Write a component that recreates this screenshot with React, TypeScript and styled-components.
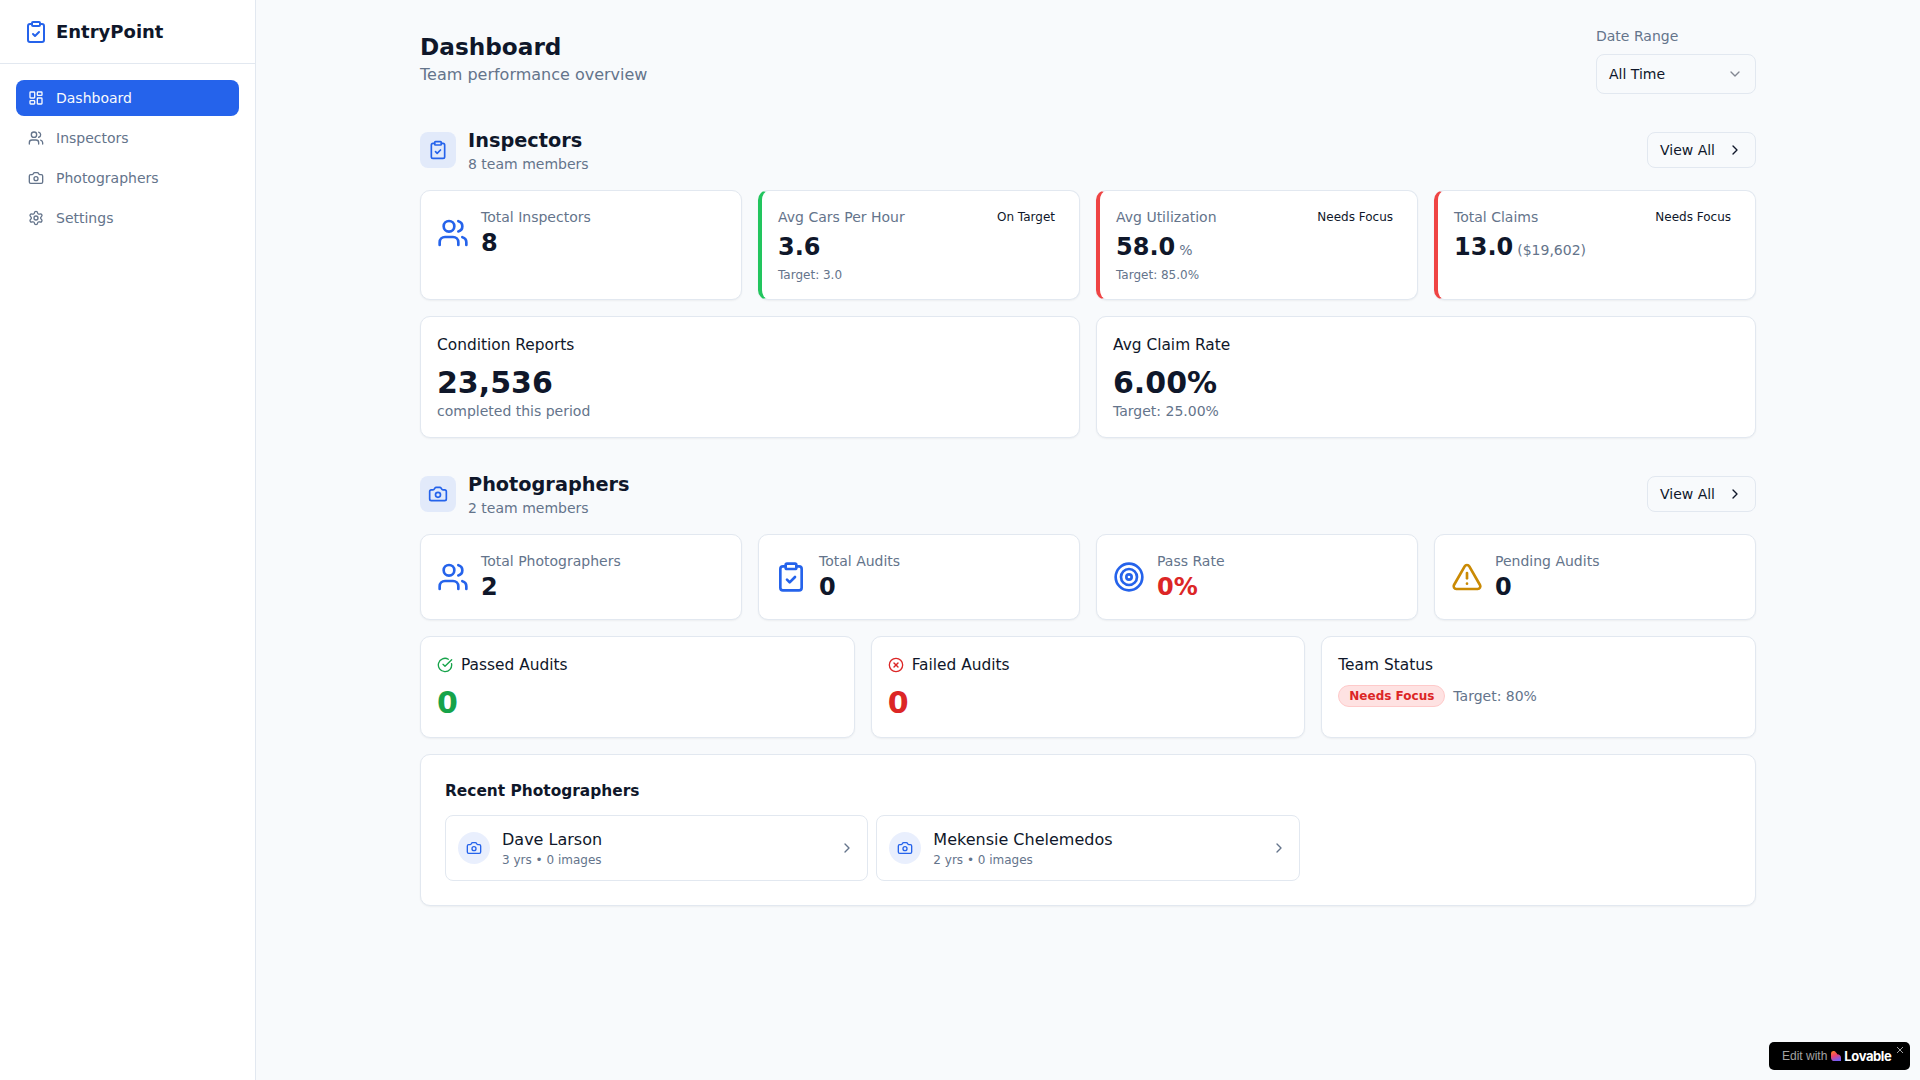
import React from 'react';
import styled, { createGlobalStyle } from 'styled-components';
import {
  Camera,
  ChevronDown,
  ChevronRight,
  CircleCheckBig,
  CircleX,
  ClipboardCheck,
  LayoutDashboard,
  Settings,
  Target,
  TriangleAlert,
  Users,
} from 'lucide-react';

const ink = '#0f172a';
const muted = '#64748b';
const line = '#e2e8f0';
const blue = '#2563eb';
const red = '#dc2626';
const green = '#16a34a';

const Global = createGlobalStyle`
  * { box-sizing: border-box; }
  html, body { margin: 0; padding: 0; }
  body {
    background: #f8fafc;
    color: ${ink};
    font-family: "DejaVu Sans", sans-serif;
    font-size: 16px;
    line-height: 24px;
  }
`;

const Shell = styled.div`
  display: flex;
  min-height: 1080px;
`;

const Sidebar = styled.aside`
  flex: 0 0 256px;
  background: #fff;
  border-right: 1px solid ${line};
`;

const Brand = styled.div`
  height: 64px;
  display: flex;
  align-items: center;
  gap: 8px;
  padding: 0 24px;
  border-bottom: 1px solid ${line};
  color: ${blue};
`;

const BrandName = styled.span`
  font-size: 18px;
  line-height: 28px;
  font-weight: 700;
  color: ${ink};
`;

const Nav = styled.nav`
  display: flex;
  flex-direction: column;
  gap: 4px;
  padding: 16px;
`;

const NavItem = styled.a<{ $active?: boolean }>`
  height: 36px;
  display: flex;
  align-items: center;
  gap: 12px;
  padding: 0 12px;
  border-radius: 8px;
  font-size: 14px;
  line-height: 20px;
  background: ${(p) => (p.$active ? blue : 'transparent')};
  color: ${(p) => (p.$active ? '#f8fafc' : muted)};
`;

const Main = styled.main`
  flex: 1;
  padding: 24px 0;
  display: flex;
  justify-content: center;
`;

const Content = styled.div`
  width: 1336px;
  display: flex;
  flex-direction: column;
  gap: 32px;
`;

const PageHeader = styled.header`
  display: flex;
  justify-content: space-between;
  align-items: center;
`;

const PageTitle = styled.h1`
  margin: 0;
  font-size: 23.2px;
  line-height: 32px;
  font-weight: 700;
`;

const PageSub = styled.p`
  margin: 0;
  font-size: 16px;
  line-height: 24px;
  color: ${muted};
`;

const RangeBox = styled.div`
  width: 160px;
  display: flex;
  flex-direction: column;
  gap: 6px;
`;

const RangeLabel = styled.label`
  font-size: 14px;
  line-height: 24px;
  font-weight: 500;
  color: ${muted};
`;

const Select = styled.div`
  height: 40px;
  display: flex;
  align-items: center;
  justify-content: space-between;
  padding: 0 12px;
  border: 1px solid ${line};
  border-radius: 8px;
  font-size: 14px;
  line-height: 20px;
  color: ${ink};
  svg { opacity: 0.5; }
`;

const Section = styled.section`
  display: flex;
  flex-direction: column;
  gap: 16px;
`;

const SectionHead = styled.div`
  display: flex;
  align-items: center;
  justify-content: space-between;
`;

const SectionLead = styled.div`
  display: flex;
  align-items: center;
  gap: 12px;
`;

const SectionIcon = styled.div`
  width: 36px;
  height: 36px;
  border-radius: 8px;
  background: rgba(37, 99, 235, 0.1);
  color: ${blue};
  display: flex;
  align-items: center;
  justify-content: center;
`;

const SectionTitle = styled.h2`
  margin: 0;
  padding-top: 1px;
  font-size: 19.3px;
  line-height: 27px;
  font-weight: 700;
`;

const SectionSub = styled.p`
  margin: 0;
  font-size: 14px;
  line-height: 20px;
  color: ${muted};
`;

const ViewAll = styled.button`
  height: 36px;
  display: flex;
  align-items: center;
  gap: 12px;
  padding: 0 12px;
  border: 1px solid ${line};
  border-radius: 8px;
  background: #f8fafc;
  color: ${ink};
  font-family: inherit;
  font-size: 14px;
  line-height: 20px;
`;

const Grid = styled.div<{ $cols: number }>`
  display: grid;
  grid-template-columns: repeat(${(p) => p.$cols}, minmax(0, 1fr));
  gap: 16px;
`;

const Card = styled.div<{ $accent?: string }>`
  background: #fff;
  border: 1px solid ${line};
  border-left: ${(p) => (p.$accent ? `4px solid ${p.$accent}` : `1px solid ${line}`)};
  border-radius: 10px;
  box-shadow: 0 1px 2px rgba(0, 0, 0, 0.05);
  padding: 16px;
`;

const StatRow = styled.div`
  display: flex;
  align-items: center;
  gap: 12px;
`;

const StatIcon = styled.div<{ $color?: string }>`
  display: flex;
  color: ${(p) => p.$color ?? blue};
`;

const StatLabel = styled.div`
  font-size: 14px;
  line-height: 20px;
  color: ${muted};
`;

const StatValue = styled.div<{ $color?: string }>`
  font-size: 24px;
  line-height: 32px;
  font-weight: 700;
  color: ${(p) => p.$color ?? ink};
`;

const KpiTop = styled.div`
  display: flex;
  justify-content: space-between;
  align-items: flex-start;
  height: 24px;
`;

const PlainBadge = styled.span`
  padding: 0 8px;
  font-size: 12px;
  line-height: 20px;
  font-weight: 500;
  color: ${ink};
`;

const Unit = styled.span`
  margin-left: 4px;
  font-size: 14px;
  line-height: 1;
  font-weight: 400;
  color: ${muted};
`;

const KpiTarget = styled.div`
  margin-top: 4px;
  font-size: 12px;
  line-height: 16px;
  color: ${muted};
`;

const BigTitle = styled.div`
  display: flex;
  align-items: center;
  gap: 8px;
  font-size: 15.4px;
  line-height: 24px;
`;

const BigValue = styled.div<{ $color?: string }>`
  margin-top: 8px;
  font-size: 30px;
  line-height: 36px;
  font-weight: 700;
  color: ${(p) => p.$color ?? ink};
`;

const BigSub = styled.div`
  font-size: 14px;
  line-height: 20px;
  color: ${muted};
`;

const StatusLine = styled.div`
  margin-top: 8px;
  display: flex;
  align-items: center;
  gap: 8px;
`;

const StatusPill = styled.span`
  height: 22px;
  padding: 0 10px;
  border: 1px solid #fecaca;
  border-radius: 999px;
  background: #fee2e2;
  color: ${red};
  font-size: 12px;
  line-height: 20px;
  font-weight: 700;
`;

const RecentCard = styled(Card)`
  padding: 24px;
`;

const RecentTitle = styled.h3`
  margin: 0 0 12px;
  font-size: 15.4px;
  line-height: 24px;
  font-weight: 700;
`;

const RecentGrid = styled.div`
  display: grid;
  grid-template-columns: repeat(3, minmax(0, 1fr));
  gap: 8px;
`;

const Person = styled.div`
  display: flex;
  align-items: center;
  gap: 12px;
  padding: 12px;
  border: 1px solid ${line};
  border-radius: 8px;
  color: ${muted};
`;

const Avatar = styled.div`
  flex: 0 0 32px;
  height: 32px;
  border-radius: 50%;
  background: rgba(37, 99, 235, 0.1);
  color: ${blue};
  display: flex;
  align-items: center;
  justify-content: center;
`;

const PersonText = styled.div`
  flex: 1;
`;

const PersonName = styled.div`
  font-size: 16px;
  line-height: 24px;
  color: ${ink};
`;

const PersonMeta = styled.div`
  font-size: 12px;
  line-height: 16px;
  color: ${muted};
`;

const LovableBadge = styled.div`
  position: fixed;
  left: 1769px;
  top: 1042px;
  width: 141px;
  height: 28px;
  background: #000;
  border-radius: 5px;
  display: flex;
  align-items: center;
  padding-left: 13px;
  font-family: "Liberation Sans", sans-serif;
  font-size: 12px;
  line-height: 16px;
  color: #a3a3a3;
`;

const LovableName = styled.span`
  margin-left: 3px;
  font-family: "Inter", sans-serif;
  font-size: 13px;
  font-weight: 700;
  letter-spacing: -0.4px;
  color: #fff;
`;

const BadgeClose = styled.span`
  position: absolute;
  right: 6px;
  top: 4px;
  display: flex;
  color: #a3a3a3;
`;

const HeartSvg = styled.svg`
  margin-left: 4px;
`;

const HeartMark = () => (
  <HeartSvg width="10" height="10" viewBox="0 0 10 10">
    <defs>
      <linearGradient id="lov" x1="0" y1="0" x2="0.4" y2="1">
        <stop offset="0" stopColor="#ff8a1e" />
        <stop offset="0.5" stopColor="#f0416c" />
        <stop offset="1" stopColor="#7a5cf0" />
      </linearGradient>
    </defs>
    <path d="M0 2.6A2.6 2.6 0 0 1 5 1.6 2.6 2.6 0 0 1 6.2 3.2C8.4 3.2 10 4.6 10 6.6V10H3.6A3.6 3.6 0 0 1 0 6.4Z" fill="url(#lov)" />
  </HeartSvg>
);

const Stat = ({ icon, label, value, color, iconColor }: { icon: React.ReactNode; label: string; value: string; color?: string; iconColor?: string }) => (
  <Card>
    <StatRow>
      <StatIcon $color={iconColor}>{icon}</StatIcon>
      <div>
        <StatLabel>{label}</StatLabel>
        <StatValue $color={color}>{value}</StatValue>
      </div>
    </StatRow>
  </Card>
);

const Kpi = ({ accent, label, badge, value, unit, target }: { accent: string; label: string; badge: string; value: string; unit?: string; target?: string }) => (
  <Card $accent={accent}>
    <KpiTop>
      <StatLabel>{label}</StatLabel>
      <PlainBadge>{badge}</PlainBadge>
    </KpiTop>
    <StatValue>
      {value}
      {unit && <Unit>{unit}</Unit>}
    </StatValue>
    {target && <KpiTarget>{target}</KpiTarget>}
  </Card>
);

const Head = ({ icon, title, sub }: { icon: React.ReactNode; title: string; sub: string }) => (
  <SectionHead>
    <SectionLead>
      <SectionIcon>{icon}</SectionIcon>
      <div>
        <SectionTitle>{title}</SectionTitle>
        <SectionSub>{sub}</SectionSub>
      </div>
    </SectionLead>
    <ViewAll>
      View All
      <ChevronRight size={16} />
    </ViewAll>
  </SectionHead>
);

const Recent = ({ name, meta }: { name: string; meta: string }) => (
  <Person>
    <Avatar>
      <Camera size={16} />
    </Avatar>
    <PersonText>
      <PersonName>{name}</PersonName>
      <PersonMeta>{meta}</PersonMeta>
    </PersonText>
    <ChevronRight size={16} />
  </Person>
);

export default function App() {
  return (
    <>
      <Global />
      <Shell>
        <Sidebar>
          <Brand>
            <ClipboardCheck size={24} />
            <BrandName>EntryPoint</BrandName>
          </Brand>
          <Nav>
            <NavItem $active>
              <LayoutDashboard size={16} />
              Dashboard
            </NavItem>
            <NavItem>
              <Users size={16} />
              Inspectors
            </NavItem>
            <NavItem>
              <Camera size={16} />
              Photographers
            </NavItem>
            <NavItem>
              <Settings size={16} />
              Settings
            </NavItem>
          </Nav>
        </Sidebar>
        <Main>
          <Content>
            <PageHeader>
              <div>
                <PageTitle>Dashboard</PageTitle>
                <PageSub>Team performance overview</PageSub>
              </div>
              <RangeBox>
                <RangeLabel>Date Range</RangeLabel>
                <Select>
                  All Time
                  <ChevronDown size={16} />
                </Select>
              </RangeBox>
            </PageHeader>

            <Section>
              <Head icon={<ClipboardCheck size={20} />} title="Inspectors" sub="8 team members" />
              <Grid $cols={4}>
                <Stat icon={<Users size={32} />} label="Total Inspectors" value="8" />
                <Kpi accent="#22c55e" label="Avg Cars Per Hour" badge="On Target" value="3.6" target="Target: 3.0" />
                <Kpi accent="#ef4444" label="Avg Utilization" badge="Needs Focus" value="58.0" unit="%" target="Target: 85.0%" />
                <Kpi accent="#ef4444" label="Total Claims" badge="Needs Focus" value="13.0" unit="($19,602)" />
              </Grid>
              <Grid $cols={2}>
                <Card>
                  <BigTitle>Condition Reports</BigTitle>
                  <BigValue>23,536</BigValue>
                  <BigSub>completed this period</BigSub>
                </Card>
                <Card>
                  <BigTitle>Avg Claim Rate</BigTitle>
                  <BigValue>6.00%</BigValue>
                  <BigSub>Target: 25.00%</BigSub>
                </Card>
              </Grid>
            </Section>

            <Section>
              <Head icon={<Camera size={20} />} title="Photographers" sub="2 team members" />
              <Grid $cols={4}>
                <Stat icon={<Users size={32} />} label="Total Photographers" value="2" />
                <Stat icon={<ClipboardCheck size={32} />} label="Total Audits" value="0" />
                <Stat icon={<Target size={32} />} label="Pass Rate" value="0%" color={red} />
                <Stat icon={<TriangleAlert size={32} />} iconColor="#ca8a04" label="Pending Audits" value="0" />
              </Grid>
              <Grid $cols={3}>
                <Card>
                  <BigTitle>
                    <CircleCheckBig size={16} color={green} />
                    Passed Audits
                  </BigTitle>
                  <BigValue $color={green}>0</BigValue>
                </Card>
                <Card>
                  <BigTitle>
                    <CircleX size={16} color={red} />
                    Failed Audits
                  </BigTitle>
                  <BigValue $color={red}>0</BigValue>
                </Card>
                <Card>
                  <BigTitle>Team Status</BigTitle>
                  <StatusLine>
                    <StatusPill>Needs Focus</StatusPill>
                    <BigSub>Target: 80%</BigSub>
                  </StatusLine>
                </Card>
              </Grid>
              <RecentCard>
                <RecentTitle>Recent Photographers</RecentTitle>
                <RecentGrid>
                  <Recent name="Dave Larson" meta="3 yrs • 0 images" />
                  <Recent name="Mekensie Chelemedos" meta="2 yrs • 0 images" />
                </RecentGrid>
              </RecentCard>
            </Section>
          </Content>
        </Main>
      </Shell>
      <LovableBadge>
        Edit with
        <HeartMark />
        <LovableName>Lovable</LovableName>
        <BadgeClose>
          <svg width="8" height="8" viewBox="0 0 8 8" stroke="currentColor" strokeWidth="1" fill="none">
            <path d="M1 1l6 6M7 1l-6 6" />
          </svg>
        </BadgeClose>
      </LovableBadge>
    </>
  );
}
